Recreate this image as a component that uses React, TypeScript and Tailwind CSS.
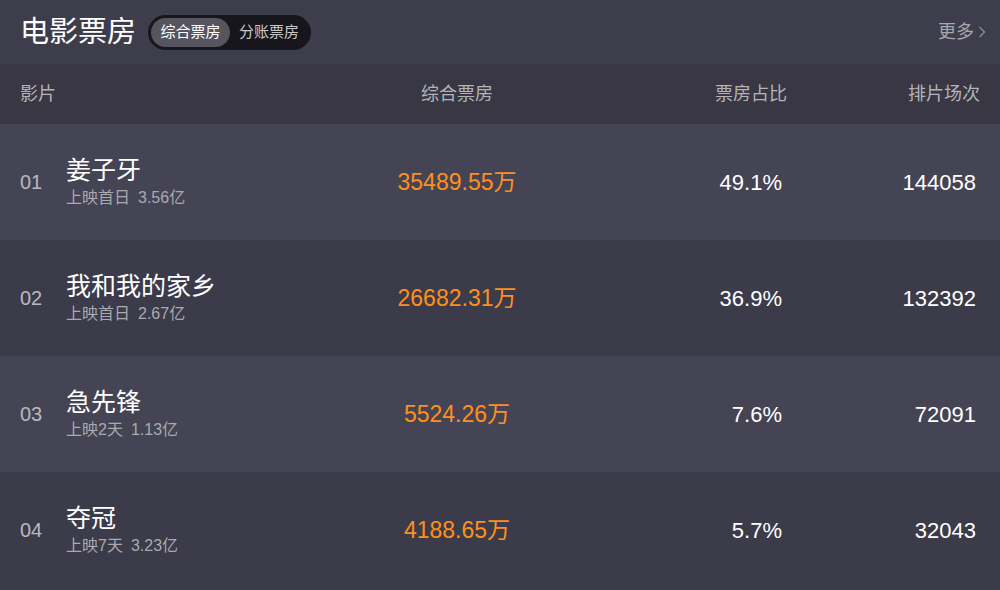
import React from "react";

const rows = [
  { rank: "01", name: "姜子牙", sub: "上映首日", subv: "3.56亿", box: "35489.55万", pct: "49.1%", n: "144058" },
  { rank: "02", name: "我和我的家乡", sub: "上映首日", subv: "2.67亿", box: "26682.31万", pct: "36.9%", n: "132392" },
  { rank: "03", name: "急先锋", sub: "上映2天", subv: "1.13亿", box: "5524.26万", pct: "7.6%", n: "72091" },
  { rank: "04", name: "夺冠", sub: "上映7天", subv: "3.23亿", box: "4188.65万", pct: "5.7%", n: "32043" },
];

export default function App() {
  return (
    <div
      className="w-[1000px] h-[590px] overflow-hidden bg-[#3c3b4a]"
      style={{ fontFamily: '"Liberation Sans", "Noto Sans CJK SC", sans-serif' }}
    >
      <div className="h-[64px] bg-[#3e3d4c] flex items-center px-5">
        <div className="text-[29px] text-white leading-none">电影票房</div>
        <div className="ml-[12px] flex items-center rounded-full bg-[#17161c] p-[3px] h-[35px]">
          <div className="h-[29px] w-[79px] rounded-full bg-[#55545f] text-[15px] text-white flex items-center justify-center">
            综合票房
          </div>
          <div className="h-[29px] w-[78px] text-[15px] text-[#c8c8cc] flex items-center justify-center">
            分账票房
          </div>
        </div>
        <div className="ml-auto flex items-center text-[18px] text-[#a6a6ab] mr-[-7px]">
          <span>更多</span>
          <svg width="10" height="14" viewBox="0 0 10 14" className="ml-[3px]">
            <path d="M2.5 2 L7.5 7 L2.5 12" fill="none" stroke="#8d8c95" strokeWidth="1.3" />
          </svg>
        </div>
      </div>
      <div className="h-[60px] bg-[#383743] flex items-center px-5 text-[18px] text-[#b4b4b8]">
        <div className="w-[337px]">影片</div>
        <div className="w-[200px] text-center">综合票房</div>
        <div className="w-[230px] text-right">票房占比</div>
        <div className="flex-1 text-right">排片场次</div>
      </div>
      {rows.map((r, i) => (
        <div
          key={r.rank}
          className={`h-[116px] flex items-center px-5 ${i % 2 === 0 ? "bg-[#454455]" : "bg-[#3c3b4a]"}`}
        >
          <div className="w-[337px] flex items-center">
            <div className="w-[46px] text-[20px] text-[#b9b9bd]">{r.rank}</div>
            <div className="flex flex-col">
              <div className="text-[25px] leading-[30px] text-white">{r.name}</div>
              <div className="text-[16px] leading-[22px] mt-[2px] text-[#a9a9ae]">
                {r.sub}
                <span className="ml-[8px]">{r.subv}</span>
              </div>
            </div>
          </div>
          <div className="w-[200px] text-center text-[23px] text-[#ff8f1c]">{r.box}</div>
          <div className="w-[225px] text-right text-[22px] text-white">{r.pct}</div>
          <div className="flex-1 text-right text-[22px] text-white pr-[4px]">{r.n}</div>
        </div>
      ))}
    </div>
  );
}
